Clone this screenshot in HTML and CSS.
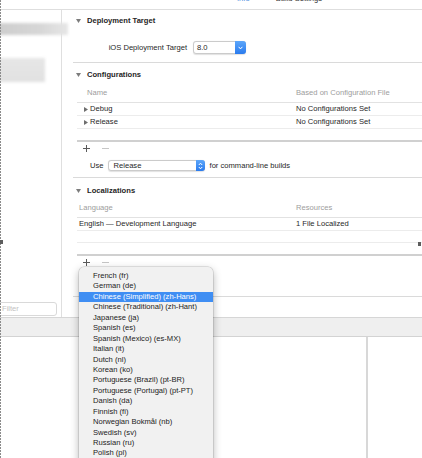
FILE: index.html
```html
<!DOCTYPE html>
<html lang="en">
<head>
    <meta charset="UTF-8">
    <title>Project Info</title>
    <link rel="stylesheet" href="styles.css">
</head>
<body>
<div id="window">
    <div id="tabs">
        <span class="tab active">Info</span>
        <span class="tab">Build Settings</span>
    </div>

    <div id="main">
        <div id="sidebar">
            <div id="filter">Filter</div>
        </div>

        <div id="editor">
            <!-- deployment target -->
            <div class="section" id="deployment">
                <div class="section-title">
                    <svg class="disclosure" width="5" height="4" viewBox="0 0 5 4"><polygon points="0,0 5,0 2.5,4" /></svg>
                    Deployment Target
                </div>
                <div class="setting-row">
                    <span class="setting-label">iOS Deployment Target</span>
                    <div class="popup" id="target-popup">
                        <span class="popup-value">8.0</span>
                        <span class="popup-arrow">
                            <svg width="5" height="4" viewBox="0 0 5 4"><polyline points="0.6,0.8 2.5,2.9 4.4,0.8" /></svg>
                        </span>
                    </div>
                </div>
            </div>

            <!-- configurations -->
            <div class="section" id="configurations">
                <div class="section-title">
                    <svg class="disclosure" width="5" height="4" viewBox="0 0 5 4"><polygon points="0,0 5,0 2.5,4" /></svg>
                    Configurations
                </div>
                <div class="table">
                    <div class="row head">
                        <span class="cell first indent">Name</span>
                        <span class="cell">Based on Configuration File</span>
                    </div>
                    <div class="row">
                        <span class="cell first expander">
                            <svg class="row-arrow" width="4" height="5" viewBox="0 0 4 5"><polygon points="0,0 4,2.5 0,5" /></svg>
                            Debug
                        </span>
                        <span class="cell">No Configurations Set</span>
                    </div>
                    <div class="row">
                        <span class="cell first expander">
                            <svg class="row-arrow" width="4" height="5" viewBox="0 0 4 5"><polygon points="0,0 4,2.5 0,5" /></svg>
                            Release
                        </span>
                        <span class="cell">No Configurations Set</span>
                    </div>
                    <div class="row empty last"></div>
                </div>
                <div class="controls">
                    <svg class="add" width="7" height="7" viewBox="0 0 7 7"><path d="M3.5 0V7M0 3.5H7" /></svg>
                    <svg class="remove" width="7" height="7" viewBox="0 0 7 7"><path d="M0 3.5H7" /></svg>
                </div>
                <div class="use-row">
                    <span class="use-label">Use</span>
                    <div class="popup" id="build-popup">
                        <span class="popup-value">Release</span>
                        <span class="popup-arrow stepper">
                            <svg width="5" height="8" viewBox="0 0 5 8"><polyline points="0.8,3 2.5,1.2 4.2,3" /><polyline points="0.8,5 2.5,6.8 4.2,5" /></svg>
                        </span>
                    </div>
                    <span class="use-note">for command-line builds</span>
                </div>
            </div>

            <!-- localizations -->
            <div class="section" id="localizations">
                <div class="section-title">
                    <svg class="disclosure" width="5" height="4" viewBox="0 0 5 4"><polygon points="0,0 5,0 2.5,4" /></svg>
                    Localizations
                </div>
                <div class="table">
                    <div class="row head">
                        <span class="cell first">Language</span>
                        <span class="cell">Resources</span>
                    </div>
                    <div class="row">
                        <span class="cell first">English — Development Language</span>
                        <span class="cell">1 File Localized</span>
                    </div>
                    <div class="row empty"></div>
                    <div class="row empty last"></div>
                </div>
                <div class="controls">
                    <svg class="add" width="7" height="7" viewBox="0 0 7 7"><path d="M3.5 0V7M0 3.5H7" /></svg>
                    <svg class="remove" width="7" height="7" viewBox="0 0 7 7"><path d="M0 3.5H7" /></svg>
                </div>
            </div>
        </div>
    </div>

    <div id="bottombar"></div>

    <div id="lower">
        <div class="lower-left"></div>
        <div class="lower-right"></div>
    </div>

    <!-- things lying over the window -->
    <div class="blur" id="blur-one"></div>
    <div class="blur" id="blur-two"></div>
    <div id="marquee"></div>
    <div class="handle" id="handle-left"></div>
    <div class="handle" id="handle-right"></div>

    <div id="language-menu">
        <div class="menu-item">French (fr)</div>
        <div class="menu-item">German (de)</div>
        <div class="menu-item selected">Chinese (Simplified) (zh-Hans)</div>
        <div class="menu-item">Chinese (Traditional) (zh-Hant)</div>
        <div class="menu-item">Japanese (ja)</div>
        <div class="menu-item">Spanish (es)</div>
        <div class="menu-item">Spanish (Mexico) (es-MX)</div>
        <div class="menu-item">Italian (it)</div>
        <div class="menu-item">Dutch (nl)</div>
        <div class="menu-item">Korean (ko)</div>
        <div class="menu-item">Portuguese (Brazil) (pt-BR)</div>
        <div class="menu-item">Portuguese (Portugal) (pt-PT)</div>
        <div class="menu-item">Danish (da)</div>
        <div class="menu-item">Finnish (fi)</div>
        <div class="menu-item">Norwegian Bokmål (nb)</div>
        <div class="menu-item">Swedish (sv)</div>
        <div class="menu-item">Russian (ru)</div>
        <div class="menu-item">Polish (pl)</div>
    </div>
</div>
</body>
</html>
```

FILE: styles.css
```css
html, body {
    margin: 0;
    padding: 0;
    background-color: #fff;
}

body {
    font-family: "Liberation Sans", Arial, sans-serif;
    font-size: 7.6px;
    color: #1f1f1f;
}

#window {
    position: relative;
    width: 422px;
    height: 458px;
    overflow: hidden;
    display: flex;
    flex-direction: column;
}

/* tab strip, cut off at the top */
#tabs {
    height: 9px;
    flex-shrink: 0;
    border-bottom: 1px solid #dedede;
    display: flex;
    padding-left: 237px;
    overflow: hidden;
}

.tab {
    line-height: 8px;
    margin-top: -5px;
    margin-right: 26px;
    color: #333;
}

.tab.active {
    color: #4d8de0;
}

#main {
    height: 307px;
    flex-shrink: 0;
    display: flex;
}

#sidebar {
    width: 62px;
    flex-shrink: 0;
    border-right: 1px solid #dfdfdf;
    display: flex;
    flex-direction: column;
    justify-content: flex-end;
    padding-bottom: 1px;
    box-sizing: border-box;
}

#filter {
    height: 14px;
    width: 63px;
    margin-left: -6px;
    padding-left: 7px;
    box-sizing: border-box;
    border: 1px solid #d9d9d9;
    border-radius: 3px;
    line-height: 12px;
    color: #c2c2c2;
}

#editor {
    flex-grow: 1;
    padding-left: 11px;
}

.section {
    border-bottom: 1px solid #dadada;
}

.section-title {
    display: flex;
    align-items: center;
    line-height: 12px;
    font-weight: bold;
    color: #262626;
    padding-left: 3px;
}

.disclosure {
    fill: #7c7c7c;
    margin-right: 6px;
}

#deployment .section-title {
    margin-top: 5px;
}

.setting-row {
    display: flex;
    align-items: center;
    height: 13px;
    margin-top: 14px;
    margin-bottom: 8px;
}

.setting-label {
    width: 114px;
    text-align: right;
    margin-right: 6px;
}

.popup {
    display: flex;
    align-items: stretch;
    background-color: #fff;
    border: 1px solid #cbcbcb;
    border-radius: 3px;
    box-sizing: border-box;
    box-shadow: 0 0.5px 1px rgba(0, 0, 0, 0.12);
}

.popup-value {
    flex-grow: 1;
    padding-left: 3px;
    display: flex;
    align-items: center;
}

.popup-arrow {
    width: 11px;
    margin: -1px -1px -1px 0;
    border-radius: 0 3px 3px 0;
    background: linear-gradient(#5ca6fa, #2a7bee);
    display: flex;
    align-items: center;
    justify-content: center;
}

.popup-arrow svg {
    fill: none;
    stroke: #fff;
    stroke-width: 1;
}

#target-popup {
    width: 53px;
    height: 13px;
}

#configurations .section-title {
    margin-top: 6px;
}

.table {
    margin-left: 4px;
    margin-top: 6px;
    border-bottom: 2px solid #d0d0d0;
}

.row {
    display: grid;
    grid-template-columns: 219px 1fr;
    line-height: 12px;
    border-bottom: 1px solid #ececec;
}

.row.head {
    color: #9d9d9d;
    padding-bottom: 3px;
    border-bottom-color: #e2e2e2;
}

.row.empty {
    height: 11px;
}

.row.last {
    border-bottom: none;
}

.cell.first {
    padding-left: 2px;
}

.cell.indent {
    padding-left: 10px;
}

.cell.expander {
    display: flex;
    align-items: center;
    padding-left: 7px;
}

.row-arrow {
    fill: #6e6e6e;
    margin-right: 2px;
}

.controls {
    height: 12px;
    display: flex;
    align-items: center;
    gap: 12px;
    padding-left: 10px;
}

.controls path {
    fill: none;
    stroke-width: 1;
}

.controls .add path {
    stroke: #5a5a5a;
}

.controls .remove path {
    stroke: #c6c6c6;
}

.use-row {
    display: flex;
    align-items: center;
    height: 11px;
    margin-top: 6px;
    margin-bottom: 6px;
    padding-left: 17px;
}

.use-label {
    margin-right: 4px;
}

#build-popup {
    width: 97px;
    height: 11px;
}

#build-popup .popup-value {
    padding-left: 5px;
}

.stepper {
    width: 9px;
}

.use-note {
    margin-left: 5px;
}

#localizations .section-title {
    margin-top: 7px;
}

#localizations .table {
    margin-top: 5px;
}

#localizations .controls {
    margin-bottom: 28px;
}

#bottombar {
    height: 20px;
    flex-shrink: 0;
    box-sizing: border-box;
    background-color: #efefef;
    border-top: 1px solid #d6d6d6;
    border-bottom: 1px solid #d3d3d3;
}

#lower {
    flex-grow: 1;
    display: flex;
}

.lower-left {
    width: 366px;
    border-right: 2px solid #d8d8d8;
}

.lower-right {
    flex-grow: 1;
}

/* blurred-out project names */
.blur {
    position: absolute;
    filter: blur(1.5px);
}

#blur-one {
    left: -4px;
    top: 23px;
    width: 72px;
    height: 12px;
    background: linear-gradient(to right, #cdcdcd, #d6d6d6 60%, #e6e6e6);
}

#blur-two {
    left: -4px;
    top: 58px;
    width: 49px;
    height: 24px;
    background: linear-gradient(#e6e6e6, #e1e1e1);
}

/* selection marquee */
#marquee {
    position: absolute;
    left: 0;
    top: 0;
    bottom: 0;
    width: 1px;
    background: repeating-linear-gradient(to bottom, #8c8c8c 0, #8c8c8c 2px, transparent 2px, transparent 3px);
}

.handle {
    position: absolute;
    width: 3px;
    height: 4px;
    background-color: #5d5d5d;
}

#handle-left {
    left: 0;
    top: 240px;
}

#handle-right {
    left: 418px;
    top: 242px;
}

/* language pop-up menu */
#language-menu {
    position: absolute;
    left: 79px;
    top: 267px;
    width: 134px;
    height: 205px;
    padding-top: 4px;
    box-sizing: border-box;
    background-color: #f1f1f1;
    border-radius: 5px;
    box-shadow: 0 3px 9px rgba(0, 0, 0, 0.3), 0 0 0 0.5px rgba(0, 0, 0, 0.18);
}

.menu-item {
    line-height: 10.45px;
    height: 10.45px;
    padding-left: 14px;
    color: #222;
    white-space: nowrap;
}

.menu-item.selected {
    background-color: #3f8ef3;
    color: #fff;
}
```
